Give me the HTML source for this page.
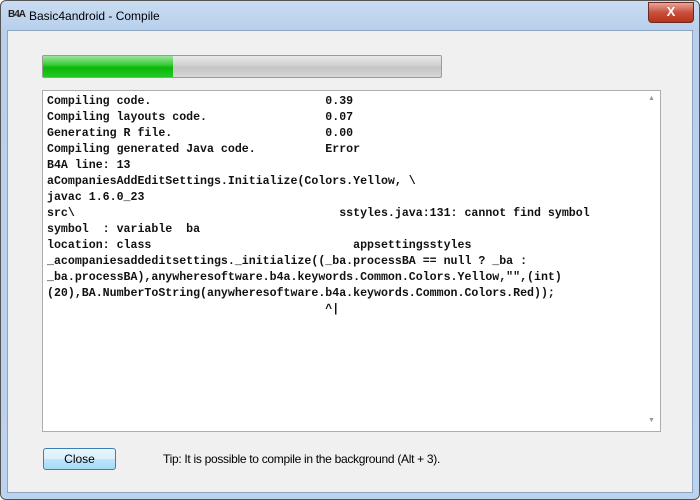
<!DOCTYPE html>
<html><head><meta charset="utf-8"><style>
body{margin:0;width:700px;height:500px;overflow:hidden;background:#fff;font-family:"Liberation Sans",sans-serif}
.win{position:absolute;left:0;top:0;width:698px;height:498px;border:1px solid #555;border-radius:6px;background:linear-gradient(#c9dcf2,#b8d0ec 30px,#bcd3ee);}
.title{position:absolute;left:28px;top:8px;font-size:12px;color:#000}
.logo{position:absolute;left:7px;top:8px;font-size:10px;font-weight:bold;letter-spacing:-1px;color:#222}
.x{position:absolute;left:647px;top:1px;width:44px;height:19px;border:1px solid #6b2a22;border-radius:0 0 4px 4px;background:linear-gradient(#e7a59a,#c9503e 50%,#b83218);color:#fff;font-weight:bold;font-size:13px;text-align:center;line-height:18px}
.client{position:absolute;left:7px;top:30px;width:684px;height:461px;background:#f0f0f0;border:1px solid #8ea5c1}
.pb{position:absolute;left:42px;top:55px;width:398px;height:21px;border:1px solid #9a9a9a;border-radius:2px;background:linear-gradient(#e9e9e9,#d0d0d0 45%,#c4c4c4 55%,#d8d8d8)}
.pf{position:absolute;left:0;top:0;width:130px;height:21px;background:linear-gradient(#9ee39e,#3ccd3c 40%,#09b809 55%,#22c822)}
.tb{position:absolute;left:42px;top:90px;width:617px;height:340px;border:1px solid #abadb3;background:#fff}
pre{margin:0;position:absolute;left:4px;top:3px;font-family:"Liberation Mono",monospace;font-size:11.6px;font-weight:bold;line-height:16px;color:#111}
.sb{position:absolute;right:0;top:0;width:16px;height:340px;background:#fff}
.sb span{position:absolute;left:4px;font-size:7px;color:#999}
.btn{position:absolute;left:43px;top:448px;width:71px;height:20px;border:1px solid #3c7fb1;border-radius:3px;background:linear-gradient(#eaf6fd,#d9f0fc 50%,#bee6fd 51%,#a7d9f5);font-size:12px;text-align:center;line-height:20px}
.tip{position:absolute;left:163px;top:452px;font-size:12px;letter-spacing:-0.3px}
</style></head><body>
<div class="win">
<div class="logo">B4A</div>
<div class="title">Basic4android - Compile</div>
<div class="x">X</div>
</div>
<div class="client"></div>
<div class="pb"><div class="pf"></div></div>
<div class="tb"><pre>Compiling code.                         0.39
Compiling layouts code.                 0.07
Generating R file.                      0.00
Compiling generated Java code.          Error
B4A line: 13
aCompaniesAddEditSettings.Initialize(Colors.Yellow, \
javac 1.6.0_23
src\                                      sstyles.java:131: cannot find symbol
symbol  : variable  ba
location: class                             appsettingsstyles
_acompaniesaddeditsettings._initialize((_ba.processBA == null ? _ba :
_ba.processBA),anywheresoftware.b4a.keywords.Common.Colors.Yellow,"",(int)
(20),BA.NumberToString(anywheresoftware.b4a.keywords.Common.Colors.Red));
                                        ^|</pre>
<div class="sb"><span style="top:4px">▲</span><span style="top:326px">▼</span></div></div>
<div class="btn">Close</div>
<div class="tip">Tip: It is possible to compile in the background (Alt + 3).</div>
</body></html>
